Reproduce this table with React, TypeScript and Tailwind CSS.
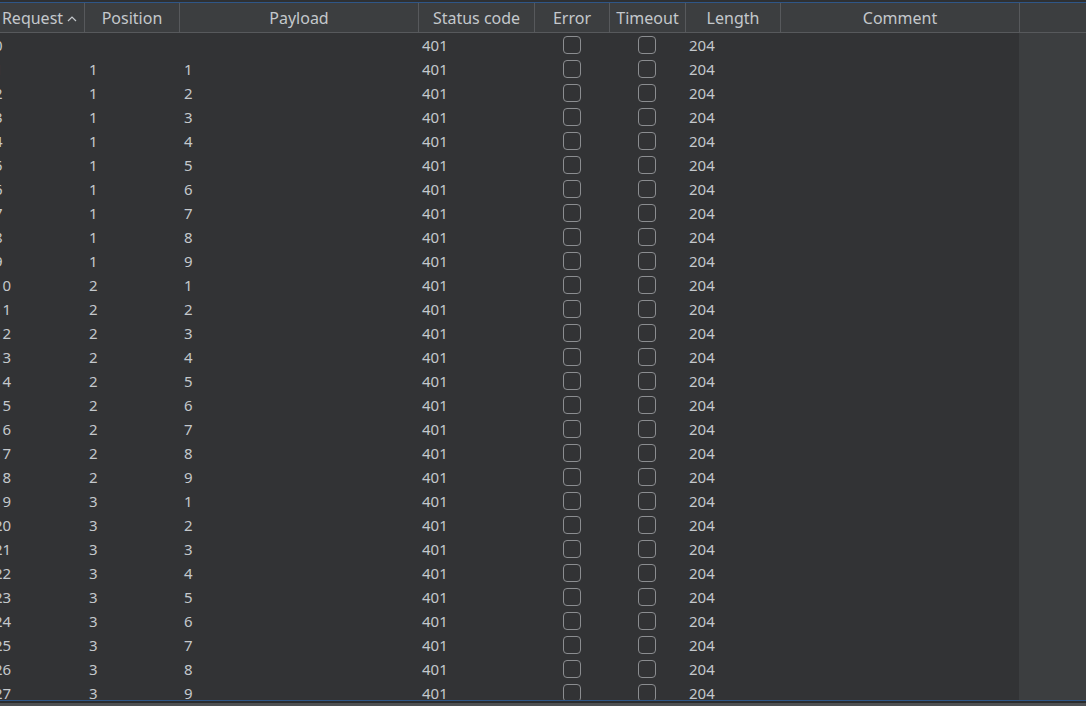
const columns = [
  { label: "Request", w: "w-[90px]", sort: true },
  { label: "Position", w: "w-[95px]" },
  { label: "Payload", w: "w-[239px]" },
  { label: "Status code", w: "w-[116px]" },
  { label: "Error", w: "w-[75px]" },
  { label: "Timeout", w: "w-[76px]" },
  { label: "Length", w: "w-[95px]" },
  { label: "Comment", w: "w-[239px]" },
];

const rows = Array.from({ length: 29 }, (_, i) => ({
  id: i,
  position: i === 0 ? "" : String(Math.floor((i - 1) / 9) + 1),
  payload: i === 0 ? "" : String(((i - 1) % 9) + 1),
  status: "401",
  length: "204",
}));

const Checkbox = () => (
  <div className="w-[18px] h-[18px] rounded-[4px] border-[1.5px] border-[#8b8d90]" />
);

const App = () => {
  return (
    <div
      className="h-screen w-full overflow-hidden flex flex-col bg-[#3c3e40] text-[#c4c8cc]"
      style={{ fontFamily: '"Noto Sans", "Open Sans", sans-serif' }}
    >
      {/* top edge */}
      <div className="h-[2px] bg-[#2e3033] shrink-0" />
      <div className="h-px bg-[#2f5687] shrink-0" />

      {/* header */}
      <div className="flex h-[30px] shrink-0 border-b border-[#57595c] bg-[#3c3e40] text-[16px] ml-[-5px]">
        {columns.map((c) => (
          <div
            key={c.label}
            className={`${c.w} shrink-0 border-r border-[#57595c] flex items-center justify-center gap-[4px]`}
          >
            <span>{c.label}</span>
            {c.sort && (
              <svg width="10" height="8" viewBox="0 0 10 8" className="mt-[2px]">
                <polyline points="1,6 5,2 9,6" fill="none" stroke="#c4c8cc" strokeWidth="1.2" />
              </svg>
            )}
          </div>
        ))}
        <div className="flex-1" />
      </div>

      {/* body */}
      <div className="flex-1 overflow-hidden flex">
        <div className="w-[1019px] shrink-0 bg-[#323335]">
          <div className="ml-[-6px] text-[15px]">
            {rows.map((r) => (
              <div key={r.id} className="flex h-[24px] items-center">
                <div className="w-[90px] shrink-0 pl-0">{r.id}</div>
                <div className="w-[95px] shrink-0 pl-[5px]">{r.position}</div>
                <div className="w-[239px] shrink-0 pl-[5px]">{r.payload}</div>
                <div className="w-[116px] shrink-0 pl-[4px]">{r.status}</div>
                <div className="w-[75px] shrink-0 flex justify-center">
                  <Checkbox />
                </div>
                <div className="w-[76px] shrink-0 flex justify-center">
                  <Checkbox />
                </div>
                <div className="w-[95px] shrink-0 pl-[4px]">{r.length}</div>
                <div className="w-[239px] shrink-0" />
              </div>
            ))}
          </div>
        </div>
        <div className="flex-1 bg-[#3c3e40]" />
      </div>

      {/* bottom edge */}
      <div className="h-px bg-[#2f5687] shrink-0" />
      <div className="h-[2px] bg-[#2b2c2e] shrink-0" />
      <div className="h-[3px] bg-[#4e5053] shrink-0" />
    </div>
  );
};

export default App;
